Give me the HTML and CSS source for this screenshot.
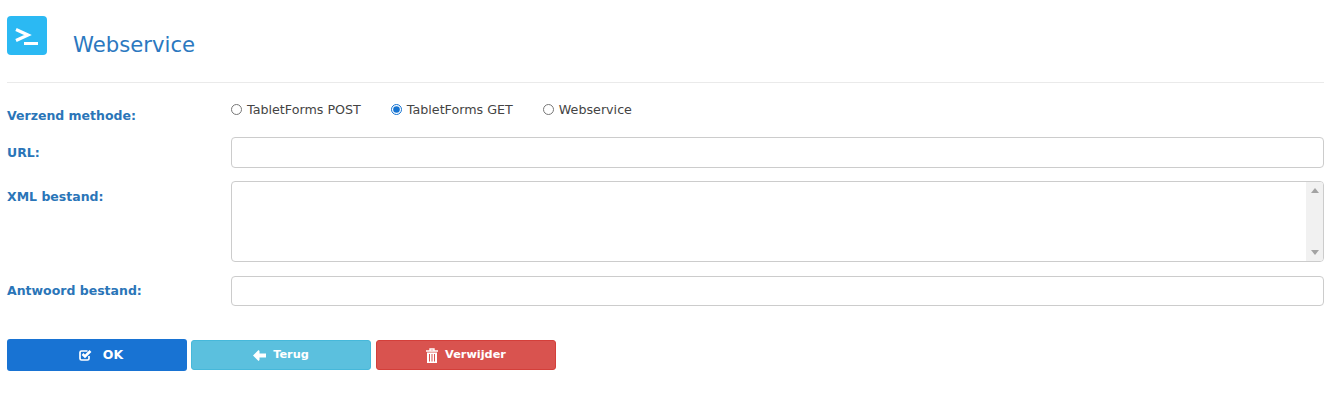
FILE: index.html
```html
<!DOCTYPE html>
<html lang="nl">
<head>
<meta charset="utf-8">
<title>Webservice</title>
<link rel="stylesheet" href="styles.css">
</head>
<body>
<main class="page">
  <header class="head">
    <svg class="logo" width="40" height="39" viewBox="0 0 40 39" aria-hidden="true">
      <rect width="40" height="39" rx="4" fill="#2bb9f3"/>
      <path d="M9 13.500 L21 19 L9 24.500" fill="none" stroke="#fff" stroke-width="3.200"/>
      <rect x="17" y="26" width="14" height="3" fill="#fff"/>
    </svg>
    <h1 class="title">Webservice</h1>
  </header>
  <form class="form">
    <div class="label label-method">Verzend methode:</div>
    <div class="radios">
      <label class="radio"><input type="radio" name="m">TabletForms POST</label>
      <label class="radio"><input type="radio" name="m" checked>TabletForms GET</label>
      <label class="radio"><input type="radio" name="m">Webservice</label>
    </div>
    <label class="label label-url">URL:</label>
    <input class="field field-url" type="text">
    <label class="label label-xml">XML bestand:</label>
    <div class="area">
      <div class="scroll">
        <svg width="8" height="5" viewBox="0 0 8 5"><path d="M4 0 L8 5 H0Z" fill="#a3a3a3"/></svg>
        <svg width="8" height="5" viewBox="0 0 8 5"><path d="M4 5 L8 0 H0Z" fill="#a3a3a3"/></svg>
      </div>
    </div>
    <label class="label label-ans">Antwoord bestand:</label>
    <input class="field" type="text">
  </form>
  <div class="actions">
    <button class="btn btn-ok" type="button">
      <svg class="ico" width="13" height="12" viewBox="0 0 13 12"><path d="M10 7v2.500A1.500 1.500 0 0 1 8.500 11H2.500A1.500 1.500 0 0 1 1 9.500V3.500A1.500 1.500 0 0 1 2.500 2H8.500" fill="none" stroke="#fff" stroke-width="1.700"/><path d="M3.500 5 L6 7.500 L11.500 2" fill="none" stroke="#fff" stroke-width="2.600"/></svg>
      <span class="ok-text">OK</span>
    </button>
    <button class="btn btn-back" type="button">
      <svg class="ico" width="13" height="11" viewBox="0 0 13 11"><path d="M0 5.500 L5.500 0 L6.500 1 V3.500 H13 V7.500 H6.500 V10 L5.500 11Z" fill="#fff"/></svg>
      Terug
    </button>
    <button class="btn btn-del" type="button">
      <svg class="ico" width="12" height="15" viewBox="0 0 12 15"><path d="M4 2.500 V1 H8 V2.500 M0 3 H12" fill="none" stroke="#fff" stroke-width="1.400"/><path d="M1 4.500 H11 V15 H1Z M3 6 V13.500 H4 V6Z M5.500 6 V13.500 H6.500 V6Z M8 6 V13.500 H9 V6Z" fill="#fff" fill-rule="evenodd"/></svg>
      Verwijder
    </button>
  </div>
</main>
</body>
</html>
```
FILE: styles.css
```css
* { box-sizing: border-box; }
html, body { margin: 0; background: #fff; }
body { font-family: "DejaVu Sans", Verdana, sans-serif; font-size: 12.700px; color: #444; }
.page { padding: 16px 16px 0 7px; width: 1340px; height: 406px; overflow: hidden; }
.head { display: flex; align-items: flex-start; height: 67px; border-bottom: 1px solid #eaeaea; }
.logo { display: block; flex: none; }
.title { margin: 15px 0 0 26px; font-size: 21.200px; line-height: 28px; font-weight: 400; color: #2b78c0; }
.form { display: grid; grid-template-columns: 224px 1093px; align-items: start; }
.label { font-weight: 700; font-size: 12.500px; line-height: 16px; color: #2a75b8; }
.label-method { margin-top: 25px; }
.label-url { margin-top: 8px; }
.label-xml { margin-top: 8px; }
.label-ans { margin-top: 7px; }
.radios { display: flex; height: 54px; padding-top: 19px; gap: 30px; }
.radio { display: flex; align-items: center; height: 16px; line-height: 16px; color: #444; }
.radio input { width: 11px; height: 11px; margin: -1px 5px 0 0; accent-color: #1573d1; }
.field { display: block; width: 1093px; height: 30px; border: 1px solid #ccc; border-radius: 4px; background: #fff; padding: 0; margin: 0 0 14px; outline: 0; }
.field-url { height: 31px; margin-bottom: 13px; }
.area { width: 1093px; height: 81px; margin-bottom: 14px; border: 1px solid #ccc; border-radius: 4px; display: flex; justify-content: flex-end; overflow: hidden; }
.scroll { width: 17px; background: #f1f1f1; display: flex; flex-direction: column; justify-content: space-between; align-items: center; padding: 6px 0; }
.scroll svg { display: block; }
.actions { display: flex; align-items: center; margin-top: 19px; }
.btn { width: 180px; height: 30px; display: flex; align-items: center; justify-content: center; gap: 7px; border: 1px solid transparent; border-radius: 3px; color: #fff; font: 700 11.300px/16px "DejaVu Sans", Verdana, sans-serif; padding: 0; }
.ico { display: block; flex: none; }
.btn-ok { height: 32px; background: #1873d3; gap: 11px; font-size: 12.500px; margin-right: 4px; }
.btn-ok .ok-text { margin-right: -8px; }
.btn-back { background: #5bc0de; border-color: #46b8da; margin-right: 5px; }
.btn-del { background: #d9534f; border-color: #d43f3a; }
```
